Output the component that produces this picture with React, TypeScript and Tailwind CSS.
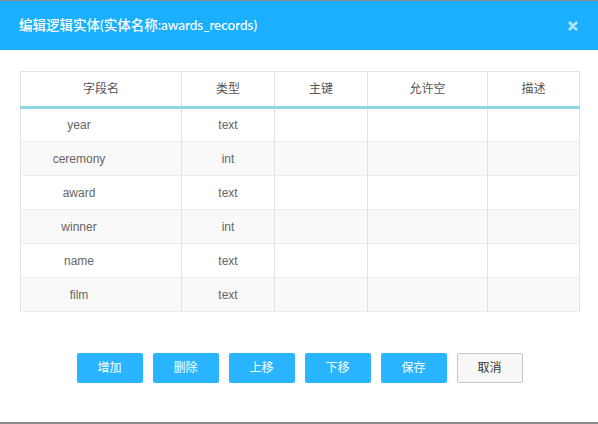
import React from 'react';

const rows = [
  { name: 'year', type: 'text' },
  { name: 'ceremony', type: 'int' },
  { name: 'award', type: 'text' },
  { name: 'winner', type: 'int' },
  { name: 'name', type: 'text' },
  { name: 'film', type: 'text' },
];

const buttons = ['增加', '删除', '上移', '下移', '保存'];

const App: React.FC = () => {
  return (
    <div
      className="h-[424px] w-[598px] overflow-hidden bg-[#8a8a8a] pt-px"
      style={{ fontFamily: '"Liberation Sans", "Noto Sans CJK SC", sans-serif' }}
    >
      <div className="flex h-[421px] flex-col bg-white">
        <div className="flex h-[49px] items-center justify-between bg-[#1aafff] pl-[19px] pr-[20px]">
          <h1
            className="text-[13.5px] font-medium text-white"
            style={{ fontFamily: 'Lato, "Noto Sans CJK SC", sans-serif' }}
          >
            编辑逻辑实体(实体名称:awards_records)
          </h1>
          <svg width="10" height="10" viewBox="0 0 10 10">
            <path d="M1.8 1.8 L8.2 8.2 M8.2 1.8 L1.8 8.2" stroke="#b5e2ff" strokeWidth="2.8" strokeLinecap="round" />
          </svg>
        </div>

        <div className="px-[20px] pt-[21px]">
          <table className="w-[559px] table-fixed border-collapse border border-[#e2e2e2] text-[12px] text-[#666]">
            <colgroup>
              <col className="w-[161px]" />
              <col className="w-[93px]" />
              <col className="w-[93px]" />
              <col className="w-[120px]" />
              <col className="w-[92px]" />
            </colgroup>
            <thead>
              <tr className="h-[36px] border-b-[3px] border-[#8ed8e5] text-[#555]">
                {['字段名', '类型', '主键', '允许空', '描述'].map((h) => (
                  <th key={h} className="border-r border-[#e2e2e2] text-center font-normal">
                    {h}
                  </th>
                ))}
              </tr>
            </thead>
            <tbody>
              {rows.map((r, i) => (
                <tr key={r.name} className={`h-[34px] border-b border-[#ececec] ${i % 2 === 1 ? 'bg-[#f9f9f9]' : 'bg-white'}`}>
                  <td className="border-r border-[#e2e2e2] pr-[44px] text-center">{r.name}</td>
                  <td className="border-r border-[#e2e2e2] text-center">{r.type}</td>
                  <td className="border-r border-[#e2e2e2]" />
                  <td className="border-r border-[#e2e2e2]" />
                  <td className="border-r border-[#e2e2e2]" />
                </tr>
              ))}
            </tbody>
          </table>
        </div>

        <div className="mt-[41px] flex justify-center gap-[10px] pl-[1px]">
          {buttons.map((b) => (
            <button
              key={b}
              className="h-[30px] w-[66px] rounded-[2px] bg-[#29b5ff] text-[12px] text-white"
            >
              {b}
            </button>
          ))}
          <button className="h-[30px] w-[66px] rounded-[2px] border border-[#c9c9c9] bg-[#f7f7f7] text-[12px] text-[#333]">
            取消
          </button>
        </div>
      </div>
    </div>
  );
};

export default App;
